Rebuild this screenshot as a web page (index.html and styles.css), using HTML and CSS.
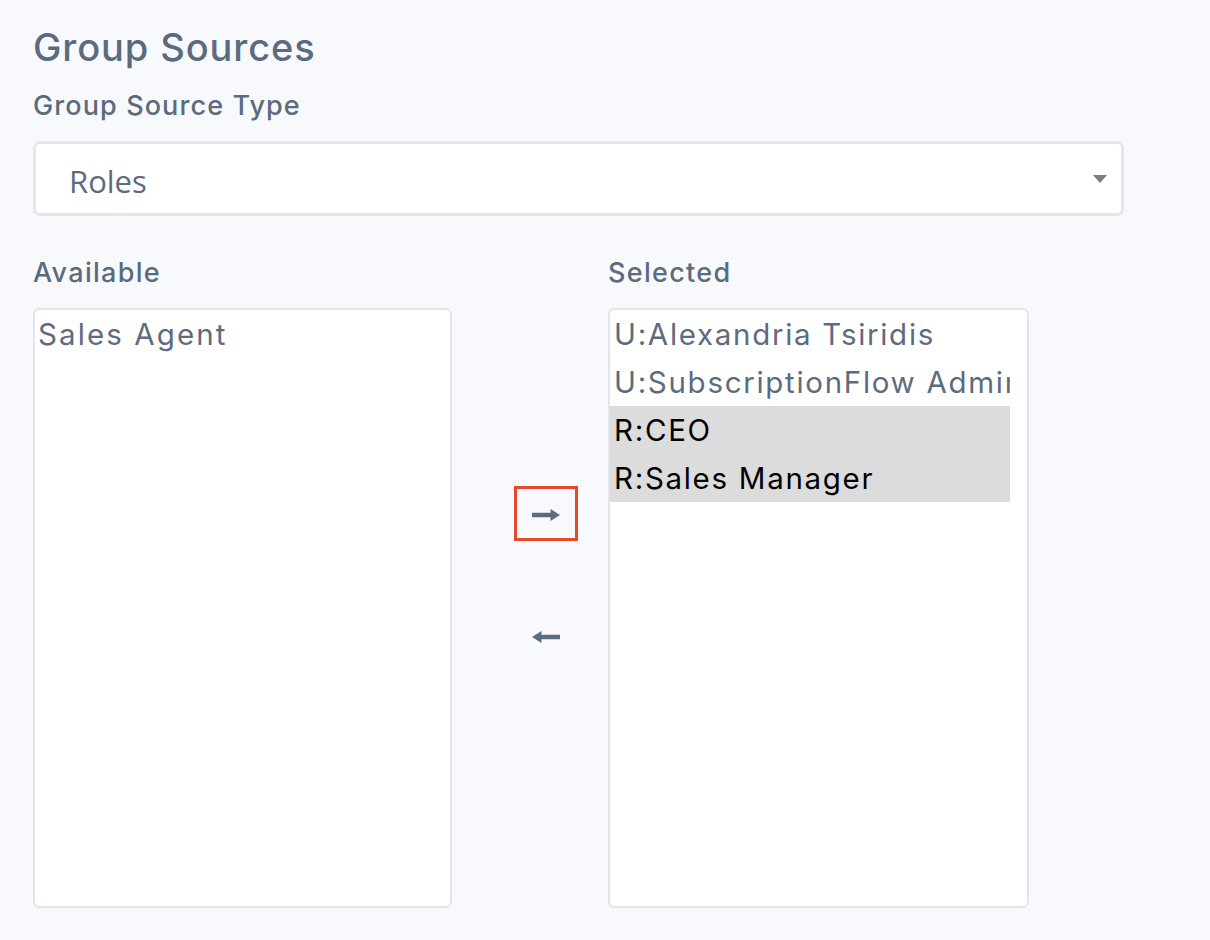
FILE: index.html
```html
<!DOCTYPE html>
<html>
<head>
<meta charset="utf-8">
<link rel="stylesheet" href="styles.css">
</head>
<body>
<div class="page">
  <h2 class="title">Group Sources</h2>
  <div class="field-label">Group Source Type</div>
  <div class="select">
    <span class="select-value">Roles</span>
    <span class="caret"></span>
  </div>
  <div class="dual">
    <div class="col-label">Available</div>
    <div></div>
    <div class="col-label">Selected</div>
    <div class="list list-left">
      <div class="item">Sales Agent</div>
    </div>
    <div class="moves">
      <button class="move move-active" aria-label="Add">
        <svg width="28" height="14" viewBox="0 0 28 14"><path d="M0 4.8h18.5V1l9.5 6-9.5 6V9.2H0z" fill="#5d6b7e"/></svg>
      </button>
      <button class="move" aria-label="Remove">
        <svg width="28" height="14" viewBox="0 0 28 14"><path d="M28 4.8H9.5V1L0 7l9.5 6V9.2H28z" fill="#5d6b7e"/></svg>
      </button>
    </div>
    <div class="list list-right">
      <div class="item">U:Alexandria Tsiridis</div>
      <div class="item">U:SubscriptionFlow Administrator</div>
      <div class="item sel">R:CEO</div>
      <div class="item sel">R:Sales Manager</div>
    </div>
  </div>
</div>
</body>
</html>
```

FILE: styles.css
```css
html, body {
  margin: 0;
  padding: 0;
  background: #f8f9fc;
}
body {
  font-family: Inter, "Open Sans", sans-serif;
  color: #5b6b7f;
}
.page {
  padding: 23px 0 0 33px;
}
.title {
  margin: 0;
  font-size: 38px;
  font-weight: 500;
  line-height: 48px;
  letter-spacing: 0.9px;
  color: #5b6b7f;
}
.field-label {
  margin-top: 19px;
  font-size: 27px;
  font-weight: 500;
  line-height: 32px;
  letter-spacing: 1.1px;
}
.select {
  margin-top: 19px;
  width: 1091px;
  height: 75px;
  box-sizing: border-box;
  border: 3px solid #e3e6eb;
  border-radius: 7px;
  background: #fff;
  display: flex;
  align-items: center;
  padding: 8px 14px 0 33px;
}
.select-value {
  flex: 1;
  font-family: "Open Sans", sans-serif;
  font-size: 31px;
  color: #5d6b7e;
  margin-top: -4px;
}
.caret {
  width: 0;
  height: 0;
  border-left: 7px solid transparent;
  border-right: 7px solid transparent;
  border-top: 8px solid #7d7d7d;
  margin-top: -8px;
}
.dual {
  margin-top: 41px;
  display: grid;
  grid-template-columns: 419px 156px 421px;
  grid-template-rows: 32px 600px;
  row-gap: 19px;
}
.col-label {
  font-size: 27px;
  font-weight: 500;
  line-height: 32px;
  letter-spacing: 1.3px;
}
.list {
  box-sizing: border-box;
  border: 2px solid #e2e5ea;
  border-radius: 6px;
  background: #fff;
  padding: 0 17px 0 0;
  overflow: hidden;
}
.item {
  height: 48px;
  line-height: 48px;
  font-size: 29.5px;
  white-space: nowrap;
  overflow: hidden;
  color: #5d6b7e;
  padding-left: 4px;
  letter-spacing: 1.7px;
}
.list-left .item { padding-left: 3px; letter-spacing: 2.1px; }
.item.sel {
  background: #dcdcdc;
  color: #000;
}
.moves {
  padding: 178px 0 0 62px;
  display: flex;
  flex-direction: column;
  gap: 67px;
}
.move {
  width: 64px;
  height: 55px;
  box-sizing: border-box;
  border: 3px solid transparent;
  background: transparent;
  padding: 3px 0 0;
  display: flex;
  align-items: center;
  justify-content: center;
  cursor: pointer;
}
.move-active {
  border-color: #e8472a;
}
```
